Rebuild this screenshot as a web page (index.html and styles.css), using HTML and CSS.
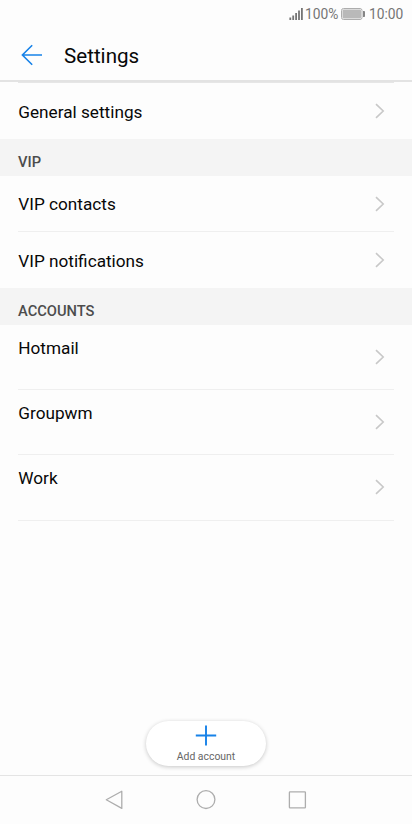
FILE: index.html
```html
<!DOCTYPE html>
<html lang="en">
<head>
<meta charset="utf-8">
<title>Settings</title>
<link rel="stylesheet" href="styles.css">
</head>
<body>
<div class="screen">
  <div class="status">
    <svg class="signal" width="15" height="14" viewBox="0 0 15 14"><path d="M1.3 10.5V13M4.2 8.5V13M7.1 6V13M10 3.5V13M12.9 1V13" fill="none" stroke="#757575" stroke-width="1.8"/></svg>
    <span class="percent">100%</span>
    <svg class="battery" width="24" height="12" viewBox="0 0 24 12"><rect x=".5" y=".5" width="20.5" height="11" rx="2" fill="#fdfdfd" stroke="#adadad"/><rect x="1.5" y="1.5" width="18.5" height="9" rx="1" fill="#b9b9b9"/><path d="M22 3h1.2q.8 0 .8.8v4.4q0 .8-.8.8H22z" fill="#858585"/></svg>
    <span class="clock">10:00</span>
  </div>
  <header class="header">
    <svg width="22" height="22" viewBox="0 0 22 22"><path d="M21 11H1.5M11.2 1.2L1.4 11l9.8 9.8" fill="none" stroke="#1782e8" stroke-width="1.6"/></svg>
    <h1 class="title">Settings</h1>
  </header>
  <main class="content">
    <div class="row row-general"><span>General settings</span><svg class="chevron" viewBox="0 0 10 16"><path d="M1 1.2L8.2 8 1 14.8"/></svg></div>
    <h2 class="section">VIP</h2>
    <div class="row row-line"><span>VIP contacts</span><svg class="chevron" viewBox="0 0 10 16"><path d="M1 1.2L8.2 8 1 14.8"/></svg></div>
    <div class="row row-low"><span>VIP notifications</span><svg class="chevron" viewBox="0 0 10 16"><path d="M1 1.2L8.2 8 1 14.8"/></svg></div>
    <h2 class="section">ACCOUNTS</h2>
    <div class="row row-line account"><span>Hotmail</span><svg class="chevron" viewBox="0 0 10 16"><path d="M1 1.2L8.2 8 1 14.8"/></svg></div>
    <div class="row row-line account"><span>Groupwm</span><svg class="chevron" viewBox="0 0 10 16"><path d="M1 1.2L8.2 8 1 14.8"/></svg></div>
    <div class="row row-line account account-last"><span>Work</span><svg class="chevron" viewBox="0 0 10 16"><path d="M1 1.2L8.2 8 1 14.8"/></svg></div>
  </main>
  <div class="add">
    <svg width="22" height="21" viewBox="0 0 22 21"><path d="M11 .5v20M.8 10.5h20.4" fill="none" stroke="#1782e8" stroke-width="1.9"/></svg>
    <span>Add account</span>
  </div>
  <nav class="nav">
    <svg width="20" height="20" viewBox="0 0 20 20"><path d="M16.8 1.2v17.2L1.3 9.8z"/></svg>
    <svg width="20" height="20" viewBox="0 0 20 20"><circle cx="10" cy="9.6" r="8.9"/></svg>
    <svg width="20" height="20" viewBox="0 0 20 20"><rect x="2.4" y="1.8" width="16" height="16" rx=".6"/></svg>
  </nav>
</div>
</body>
</html>
```
FILE: styles.css
```css
* { box-sizing: border-box; }
body { margin: 0; background: #fdfdfd; font-family: Roboto, sans-serif; color: #080808; }
.screen { height: 824px; display: flex; flex-direction: column; overflow: hidden; }
.status { height: 28px; display: flex; align-items: center; justify-content: flex-end; padding-right: 9px; font-size: 13.8px; color: #757575; }
.signal { margin-right: 1px; }
.percent { width: 33px; margin-right: 3px; }
.battery { margin-right: 4px; }
.clock { width: 34px; }
.header { height: 54px; display: flex; align-items: center; gap: 21px; padding: 2px 21px 0; border-bottom: 2px solid #e3e3e3; }
.title { margin: 2px 0 0; font-size: 20.6px; line-height: 26px; font-weight: 400; }
.content { flex: 1; }
.row { height: 56px; margin: 0 18px; padding: 0 9px 0 0; display: flex; align-items: center; justify-content: space-between; font-size: 17.2px; line-height: 22px; }
.row span { margin-left: .3px; }
.row-general { height: 57px; border-top: 1px solid #e6e6e6; }
.row-general span, .row-low span { padding-top: 2px; }
.row-line { border-bottom: 1px solid #efefef; }
.chevron { width: 10px; height: 16px; }
.chevron path { fill: none; stroke: #c8c8c8; stroke-width: 1.6; }
.section { height: 37px; margin: 0; padding: 9px 18px 0; background: #f4f4f4; font-size: 14.7px; line-height: 28px; font-weight: 500; color: #4c4c4c; }
.account { height: 65px; }
.account span { align-self: flex-start; margin-top: 12px; }
.account-last { height: 66px; }
.account-last .chevron { margin-bottom: 1px; }
.add { width: 120px; height: 45px; margin: 0 auto 9px; padding-top: 4px; display: flex; flex-direction: column; align-items: center; border-radius: 23px; background: #fff; box-shadow: 0 1px 4px rgba(0, 0, 0, .22); font-size: 10.4px; line-height: 13px; color: #666; }
.add span { margin-top: 4px; }
.nav { height: 49px; display: flex; justify-content: center; align-items: center; gap: 71px; border-top: 1px solid #e4e4e4; }
.nav svg { fill: none; stroke: #adadad; stroke-width: 1.3; stroke-linejoin: round; }
```
